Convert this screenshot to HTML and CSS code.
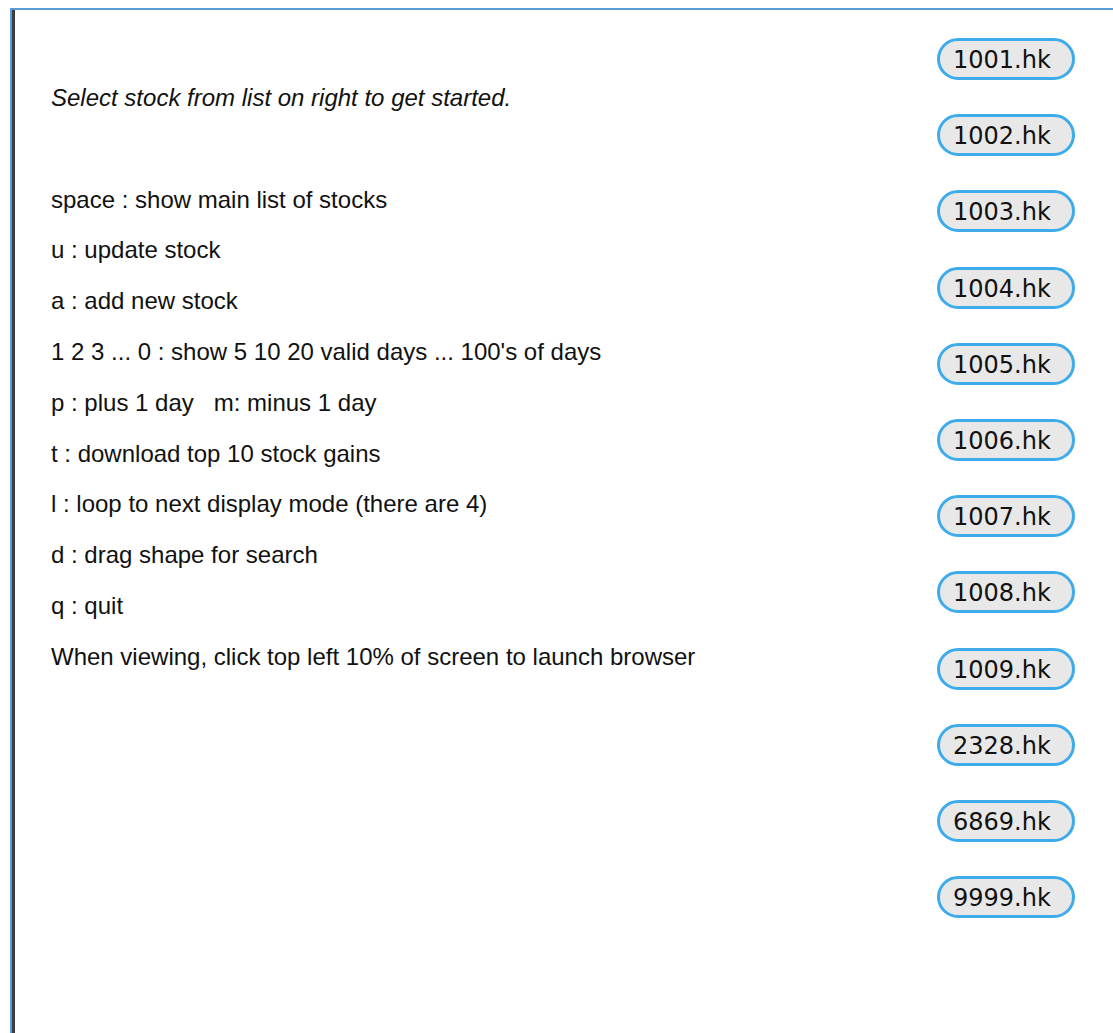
FILE: index.html
```html
<!DOCTYPE html>
<html>
<head>
<meta charset="utf-8">
<title>Stocks</title>
<link rel="stylesheet" href="styles.css">
</head>
<body>
<div class="frame">
  <div class="panel">
    <div class="help">
      <div class="line intro">Select stock from list on right to get started.</div>
      <div class="line blank"></div>
      <div class="line">space : show main list of stocks</div>
      <div class="line">u : update stock</div>
      <div class="line">a : add new stock</div>
      <div class="line">1 2 3 ... 0 : show 5 10 20 valid days ... 100's of days</div>
      <div class="line">p : plus 1 day&nbsp;&nbsp;&nbsp;m: minus 1 day</div>
      <div class="line">t : download top 10 stock gains</div>
      <div class="line">l : loop to next display mode (there are 4)</div>
      <div class="line">d : drag shape for search</div>
      <div class="line">q : quit</div>
      <div class="line">When viewing, click top left 10% of screen to launch browser</div>
    </div>
    <div class="stocks">
      <button class="stock">1001.hk</button>
      <button class="stock">1002.hk</button>
      <button class="stock">1003.hk</button>
      <button class="stock">1004.hk</button>
      <button class="stock">1005.hk</button>
      <button class="stock">1006.hk</button>
      <button class="stock">1007.hk</button>
      <button class="stock">1008.hk</button>
      <button class="stock">1009.hk</button>
      <button class="stock">2328.hk</button>
      <button class="stock">6869.hk</button>
      <button class="stock">9999.hk</button>
    </div>
  </div>
</div>
</body>
</html>
```
FILE: styles.css
```css
html, body {
  margin: 0;
  padding: 0;
  background: #ffffff;
  overflow: hidden;
}

.frame {
  margin: 8px 0 0 10px;
  height: 1025px;
  border-top: 2px solid #5b9bd5;
  border-left: 2px solid #5b9bd5;
  box-sizing: border-box;
}

.panel {
  height: 100%;
  border-left: 3px solid #3c3c3c;
  display: flex;
  justify-content: space-between;
  box-sizing: border-box;
}

.help {
  padding: 63px 0 0 36px;
  font-family: "Liberation Sans", Arial, sans-serif;
  font-size: 24px;
  color: #111111;
}

.line {
  height: 50.8px;
  line-height: 50.8px;
  white-space: nowrap;
}

.intro {
  font-style: italic;
}

.stocks {
  padding: 28px 38px 0 0;
  display: flex;
  flex-direction: column;
  gap: 34.2px;
}

.stock {
  width: 138px;
  height: 42px;
  box-sizing: border-box;
  margin: 0;
  padding: 2px 0 0 13px;
  text-align: left;
  border: 3px solid #3eabea;
  border-radius: 21px;
  background: #e8e8e8;
  font-family: "DejaVu Sans", sans-serif;
  font-size: 24px;
  color: #111111;
  line-height: 34px;
}
```
